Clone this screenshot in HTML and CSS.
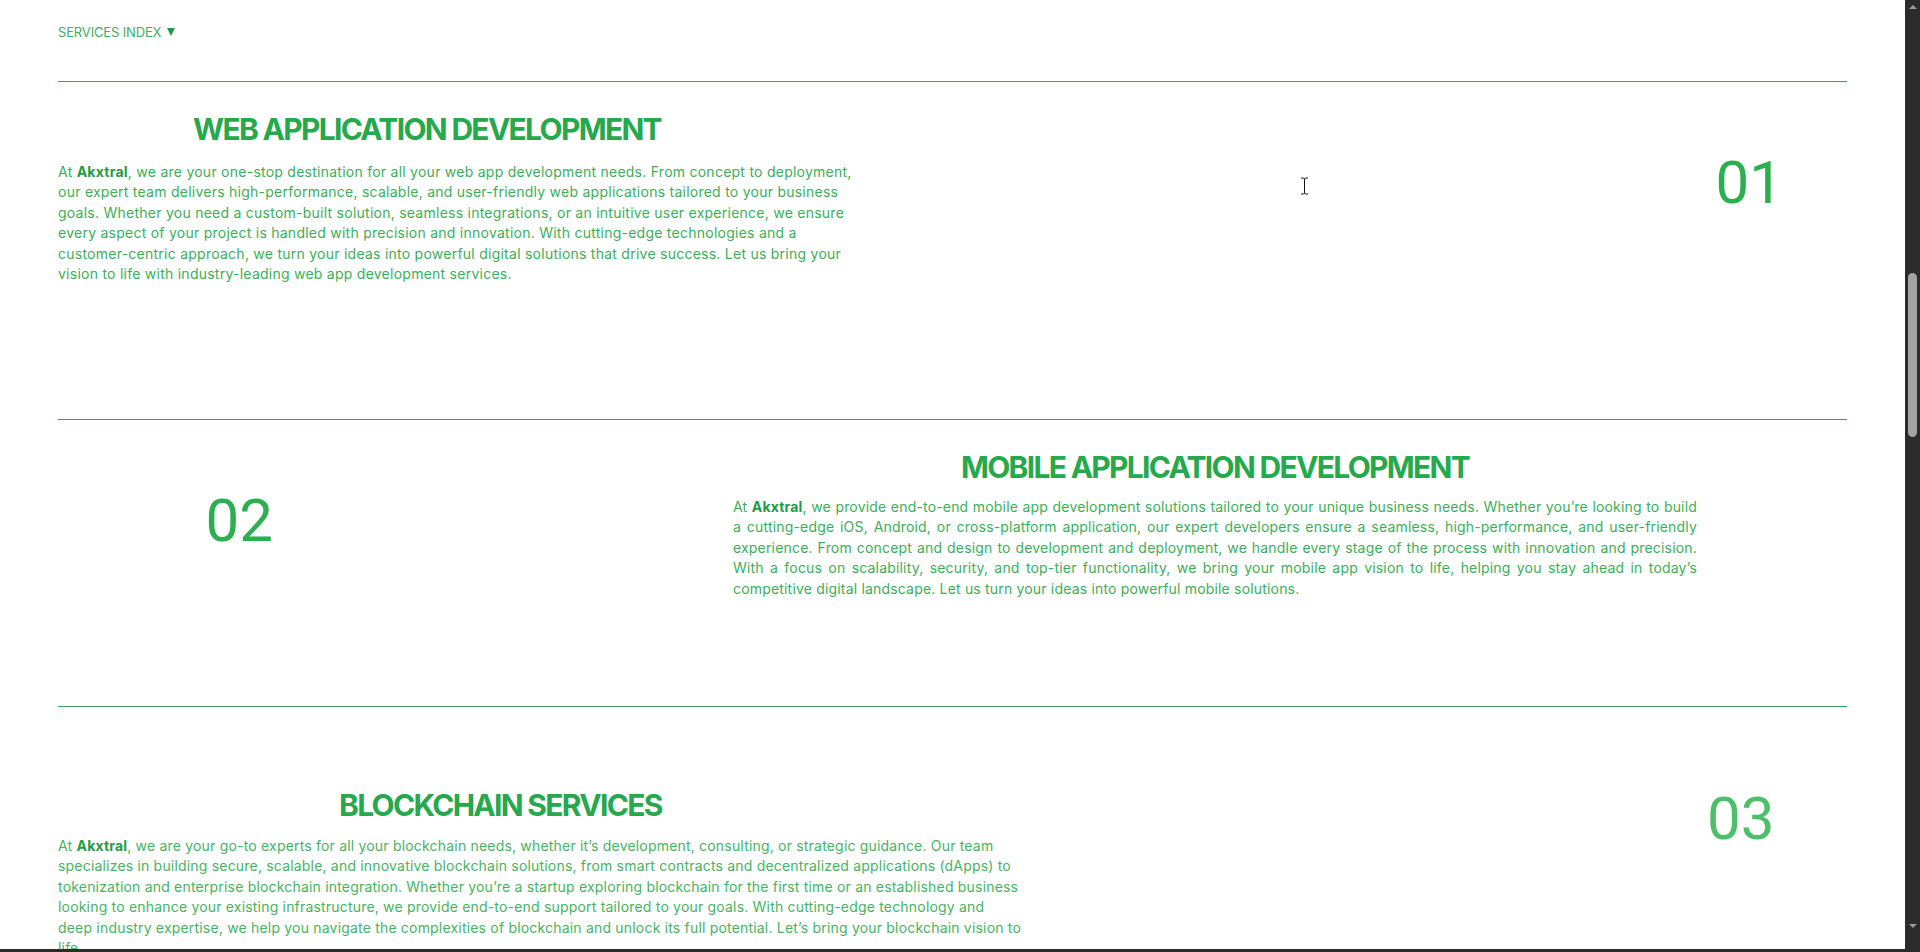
FILE: index.html
```html
<!DOCTYPE html>
<html lang="en">
<head>
<meta charset="utf-8">
<title>Services Index</title>
<link rel="stylesheet" href="styles.css">
</head>
<body>
<div class="app">
  <div class="viewport">
    <main class="page">
      <div class="index">SERVICES INDEX <span class="caret"></span></div>

      <section class="service s1">
        <div class="text">
          <h2 class="title">WEB APPLICATION DEVELOPMENT</h2>
          <p class="copy">
            <span class="ln">At <b>Akxtral</b>, we are your one-stop destination for all your web app development needs. From concept to deployment,</span>
            <span class="ln">our expert team delivers high-performance, scalable, and user-friendly web applications tailored to your business</span>
            <span class="ln">goals. Whether you need a custom-built solution, seamless integrations, or an intuitive user experience, we ensure</span>
            <span class="ln">every aspect of your project is handled with precision and innovation. With cutting-edge technologies and a</span>
            <span class="ln">customer-centric approach, we turn your ideas into powerful digital solutions that drive success. Let us bring your</span>
            <span class="ln">vision to life with industry-leading web app development services.</span>
          </p>
        </div>
        <div class="num">01</div>
      </section>

      <section class="service s2">
        <div class="num">02</div>
        <div class="text">
          <h2 class="title">MOBILE APPLICATION DEVELOPMENT</h2>
          <p class="copy justified">
            <span class="ln">At <b>Akxtral</b>, we provide end-to-end mobile app development solutions tailored to your unique business needs. Whether you’re looking to build</span>
            <span class="ln">a cutting-edge iOS, Android, or cross-platform application, our expert developers ensure a seamless, high-performance, and user-friendly</span>
            <span class="ln">experience. From concept and design to development and deployment, we handle every stage of the process with innovation and precision.</span>
            <span class="ln">With a focus on scalability, security, and top-tier functionality, we bring your mobile app vision to life, helping you stay ahead in today’s</span>
            <span class="ln last">competitive digital landscape. Let us turn your ideas into powerful mobile solutions.</span>
          </p>
        </div>
      </section>

      <section class="service s3">
        <div class="text">
          <h2 class="title">BLOCKCHAIN SERVICES</h2>
          <p class="copy">
            <span class="ln">At <b>Akxtral</b>, we are your go-to experts for all your blockchain needs, whether it’s development, consulting, or strategic guidance. Our team</span>
            <span class="ln">specializes in building secure, scalable, and innovative blockchain solutions, from smart contracts and decentralized applications (dApps) to</span>
            <span class="ln">tokenization and enterprise blockchain integration. Whether you’re a startup exploring blockchain for the first time or an established business</span>
            <span class="ln">looking to enhance your existing infrastructure, we provide end-to-end support tailored to your goals. With cutting-edge technology and</span>
            <span class="ln">deep industry expertise, we help you navigate the complexities of blockchain and unlock its full potential. Let’s bring your blockchain vision to</span>
            <span class="ln">life.</span>
          </p>
        </div>
        <div class="num">03</div>
      </section>
    </main>
    <div class="vscroll">
      <span class="arrow-up"></span>
      <span class="thumb"></span>
      <span class="spacer"></span>
      <span class="arrow-down"></span>
    </div>
  </div>
  <div class="hstrip"></div>
  <svg class="cursor" width="9" height="18" viewBox="0 0 9 18" aria-hidden="true">
    <path d="M1 1h2.5l1 1 1-1H8M4.5 2v14M1 17h2.5l1-1 1 1H8" fill="none" stroke="#fff" stroke-width="2.4"/>
    <path d="M1 1h2.5l1 1 1-1H8M4.5 2v14M1 17h2.5l1-1 1 1H8" fill="none" stroke="#111" stroke-width="1"/>
  </svg>
</div>
</body>
</html>
```

FILE: styles.css
```css
* { box-sizing: border-box; }

html, body {
  margin: 0;
  padding: 0;
  background: #ffffff;
}

body {
  font-family: Inter, "Liberation Sans", sans-serif;
  color: #38ae57;
}

.app {
  position: relative;
  display: flex;
  flex-direction: column;
  height: 100vh;
  overflow: hidden;
  background: #ffffff;
}

.viewport {
  display: flex;
  height: 949px;
  overflow: hidden;
}

.page {
  flex: 1;
  min-width: 0;
  padding: 0 58px;
  overflow: hidden;
}

/* header */
.index {
  padding: 22px 0 39px;
  font-size: 13px;
  line-height: 20px;
  letter-spacing: -0.15px;
  color: #41af5d;
  display: flex;
  align-items: center;
}

.caret {
  display: inline-block;
  width: 0;
  height: 0;
  margin-left: 6px;
  border-left: 4.5px solid transparent;
  border-right: 4.5px solid transparent;
  border-top: 8px solid #1f9d46;
}

/* service rows */
.service {
  display: flex;
  align-items: flex-start;
  border-top: 1px solid #3f9f5f;
}

.title {
  margin: 0;
  font-size: 30px;
  line-height: 36px;
  font-weight: 700;
  letter-spacing: -1.7px;
  color: #25a94c;
  white-space: nowrap;
}

.copy {
  margin: 0;
  font-size: 14px;
  line-height: 20.5px;
  letter-spacing: 0.25px;
  color: #3aaf58;
}

.copy b {
  font-weight: 700;
  color: #1f9c45;
}

.ln {
  display: block;
  white-space: nowrap;
}

.justified .ln {
  text-align: justify;
  text-align-last: justify;
}

.justified .ln.last {
  text-align-last: left;
}

.num {
  font-family: Roboto, "Liberation Sans", sans-serif;
  font-size: 60px;
  line-height: 60px;
  font-weight: 400;
  color: #2bb050;
  white-space: nowrap;
}

/* row 1 */
.s1 .text {
  width: 840px;
  padding: 29px 0 134.5px;
}
.s1 .title { margin: 0 0 14.5px 135px; }
.s1 .num { margin: 71px 64px 0 auto; }

/* row 2 */
.s2 .num { margin: 71px 0 0 147.5px; }
.s2 .text {
  width: 964px;
  margin: 0 150px 0 auto;
  padding: 28.5px 0 106.75px;
}
.s2 .title {
  text-align: center;
  margin-bottom: 12.25px;
}
.s2 .copy { letter-spacing: 0.18px; }

/* row 3 */
.s3 .text {
  width: 1000px;
  padding: 79.5px 0 40px;
}
.s3 .title { margin: 0 0 13.25px 281px; }
.s3 .copy {
  color: #45b462;
  letter-spacing: 0.19px;
}
.s3 .num {
  margin: 82px 72.5px 0 auto;
  color: #4dbf69;
}

/* fake browser scrollbar */
.vscroll {
  width: 15px;
  flex: none;
  background: #2b2b2b;
  display: flex;
  flex-direction: column;
  align-items: center;
}

.arrow-up {
  margin-top: 5px;
  width: 0;
  height: 0;
  border-left: 4px solid transparent;
  border-right: 4px solid transparent;
  border-bottom: 4px solid #9c9c9c;
}

.thumb {
  margin-top: 264px;
  width: 9px;
  height: 164px;
  border-radius: 4.5px;
  background: #a3a3a3;
}

.spacer { flex: 1; }

.arrow-down {
  margin-bottom: 21px;
  width: 0;
  height: 0;
  border-left: 4px solid transparent;
  border-right: 4px solid transparent;
  border-top: 4px solid #9c9c9c;
}

.hstrip {
  height: 3px;
  flex: none;
  background: #2b2b2b;
}

.cursor {
  position: absolute;
  left: 1300px;
  top: 177px;
}
```
